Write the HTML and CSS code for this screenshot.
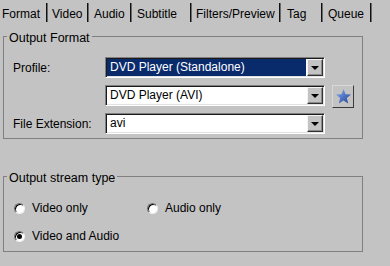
FILE: index.html
```html
<!DOCTYPE html>
<html lang="en">
<head>
  <meta charset="UTF-8">
  <title>Output Settings</title>
  <link rel="stylesheet" href="styles.css">
</head>
<body class="settings-page">
  <div class="tabs">
    <span class="tab tab-format">Format</span>
    <span class="tab tab-video">Video</span>
    <span class="tab tab-audio">Audio</span>
    <span class="tab tab-subtitle">Subtitle</span>
    <span class="tab tab-filters">Filters/Preview</span>
    <span class="tab tab-tag">Tag</span>
    <span class="tab tab-queue">Queue</span>
  </div>

  <fieldset class="group group-format">
    <legend>Output Format</legend>
    <div class="form-grid">
      <label class="field-label">Profile:</label>
      <div class="combo">
        <span class="combo-text selected">DVD Player (Standalone)</span>
        <span class="combo-btn"></span>
      </div>
      <span></span>

      <span></span>
      <div class="combo">
        <span class="combo-text">DVD Player (AVI)</span>
        <span class="combo-btn"></span>
      </div>
      <button class="star-btn" type="button">
        <svg width="17" height="17" viewBox="0 0 16 16">
          <defs>
            <linearGradient id="starFill" x1="0" y1="0" x2="1" y2="1">
              <stop offset="0" stop-color="#9ab8ee"/>
              <stop offset="0.5" stop-color="#4f74c4"/>
              <stop offset="1" stop-color="#26428e"/>
            </linearGradient>
          </defs>
          <polygon points="8,1 9.94,5.83 15.13,6.18 11.14,9.52 12.41,14.57 8,11.8 3.59,14.57 4.86,9.52 0.87,6.18 6.06,5.83" fill="url(#starFill)"/>
        </svg>
      </button>

      <label class="field-label">File Extension:</label>
      <div class="combo">
        <span class="combo-text">avi</span>
        <span class="combo-btn"></span>
      </div>
      <span></span>
    </div>
  </fieldset>

  <fieldset class="group group-stream">
    <legend>Output stream type</legend>
    <div class="radio-grid">
      <label class="radio"><span class="radio-dot"></span>Video only</label>
      <label class="radio"><span class="radio-dot"></span>Audio only</label>
      <label class="radio"><span class="radio-dot checked"></span>Video and Audio</label>
    </div>
  </fieldset>
</body>
</html>
```

FILE: styles.css
```css
body.settings-page {
  margin: 0;
  background: #c3c3c3;
  color: #000;
  font-family: "Liberation Sans", Arial, sans-serif;
  font-size: 12px;
  width: 390px;
  height: 266px;
  overflow: hidden;
}

/* tab strip */
.tabs {
  display: flex;
  height: 22px;
  padding-top: 3px;
  box-sizing: border-box;
}

.tab {
  box-sizing: border-box;
  height: 19px;
  padding: 3px 0 0 6px;
  line-height: 16px;
  border-right: 1px solid #111;
  box-shadow: 1px 0 0 #6a6a6a;
  white-space: nowrap;
}

.tab-format { width: 47px; padding-left: 2px; }
.tab-video { width: 41px; padding-left: 5px; }
.tab-audio { width: 43px; }
.tab-subtitle { width: 60px; }
.tab-filters { width: 89px; padding-left: 5px; }
.tab-tag { width: 42px; padding-left: 7px; }
.tab-queue { width: 49px; }

/* group boxes */
.group {
  box-sizing: border-box;
  width: 360px;
  margin: 6px 0 0 3px;
  border: 1px solid #808080;
  padding: 12px 0 4px 9px;
  min-width: 0;
}

.group legend {
  margin-left: -6px;
  padding: 3px 2px 0;
  font-size: 12.5px;
  line-height: 14px;
}

.group-stream {
  margin-top: 29px;
  padding: 15px 0 7px 10px;
}

.group-stream legend {
  margin-left: -7px;
}

.form-grid {
  display: grid;
  grid-template-columns: 92px 220px auto;
  grid-auto-rows: 21px;
  row-gap: 7px;
  align-items: center;
}

.field-label {
  line-height: 16px;
}

/* combo box */
.combo {
  box-sizing: border-box;
  display: flex;
  height: 21px;
  padding: 1px;
  border: 1px solid;
  border-color: #808080 #fff #fff #808080;
  box-shadow: inset 1px 1px 0 #1a1a1a, inset -1px -1px 0 #e2e2e2;
  background: #fff;
}

.combo-text {
  flex: 1;
  padding-left: 3px;
  line-height: 17px;
  white-space: nowrap;
  overflow: hidden;
}

.combo-text.selected {
  background: #0a2b6b;
  color: #fff;
}

.combo-btn {
  box-sizing: border-box;
  width: 16px;
  margin-left: 1px;
  background: #c3c3c3;
  border: 1px solid;
  border-color: #f4f4f4 #333 #333 #f4f4f4;
  box-shadow: inset -1px -1px 0 #8a8a8a;
  display: flex;
  align-items: center;
  justify-content: center;
}

.combo-btn::after {
  content: "";
  border-top: 4px solid #000;
  border-left: 4px solid transparent;
  border-right: 4px solid transparent;
  margin-top: 1px;
}

.star-btn {
  align-self: start;
  box-sizing: border-box;
  width: 22px;
  height: 23px;
  margin-left: 7px;
  padding: 0;
  background: #c3c3c3;
  border: 1px solid;
  border-color: #d8d8d8 #3a3a3a #3a3a3a #d8d8d8;
  display: flex;
  align-items: center;
  justify-content: center;
}

/* radios */
.radio-grid {
  display: grid;
  grid-template-columns: 133px auto;
  row-gap: 12px;
}

.radio {
  display: flex;
  align-items: center;
  gap: 7px;
  line-height: 16px;
}

.radio-dot {
  box-sizing: border-box;
  width: 11px;
  height: 11px;
  border-radius: 50%;
  border: 1px solid;
  border-color: #707070 #f0f0f0 #f0f0f0 #707070;
  box-shadow: inset 1px 1px 0 #000;
  background: #fff;
  display: flex;
  align-items: center;
  justify-content: center;
}

.radio-dot.checked::after {
  content: "";
  width: 5px;
  height: 5px;
  border-radius: 50%;
  background: #000;
}
```
